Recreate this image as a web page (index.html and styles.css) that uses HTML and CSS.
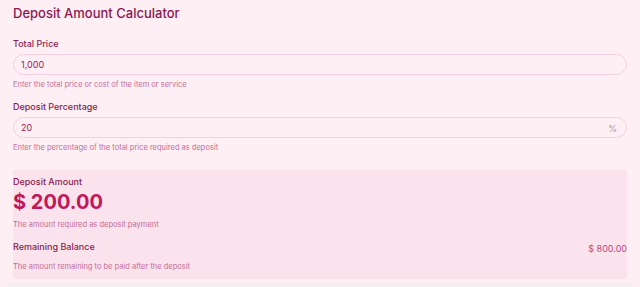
FILE: index.html
```html
<!DOCTYPE html>
<html lang="en">
<head>
  <meta charset="UTF-8">
  <title>Deposit Amount Calculator</title>
  <link rel="stylesheet" href="styles.css">
</head>
<body>

  <div class="calculator">
    <h1>Deposit Amount Calculator</h1>

    <div class="field">
      <label for="totalPrice">Total Price</label>
      <div class="input-wrap">
        <input id="totalPrice" type="text" value="1,000">
      </div>
      <p class="hint">Enter the total price or cost of the item or service</p>
    </div>

    <div class="field">
      <label for="depositPercent">Deposit Percentage</label>
      <div class="input-wrap">
        <input id="depositPercent" type="text" value="20">
        <span class="suffix">%</span>
      </div>
      <p class="hint">Enter the percentage of the total price required as deposit</p>
    </div>

    <div class="result">
      <div class="result-label">Deposit Amount</div>
      <div class="result-value">$ 200.00</div>
      <p class="hint">The amount required as deposit payment</p>

      <div class="balance-row">
        <div class="result-label">Remaining Balance</div>
        <div class="balance-value">$ 800.00</div>
      </div>
      <p class="hint">The amount remaining to be paid after the deposit</p>
    </div>
  </div>

  <div class="footer-line"></div>

</body>
</html>
```

FILE: styles.css
```css
body {
  font-family: Inter, "Noto Sans", sans-serif;
  margin: 0;
  background: #fdeff4;
  color: #8a1b4f;
}

.calculator {
  padding: 3px 13px 0;
}

h1 {
  margin: 0 0 15px;
  font-size: 13px;
  font-weight: 500;
  line-height: 20px;
  color: #8e1652;
}

.field {
  margin-bottom: 11px;
}

.field + .field {
  margin-bottom: 17px;
}

label {
  display: block;
  font-size: 9px;
  font-weight: 500;
  line-height: 12px;
  margin-bottom: 4px;
  color: #8a1b4f;
}

.input-wrap {
  position: relative;
}

input {
  display: block;
  width: 100%;
  box-sizing: border-box;
  height: 21px;
  padding: 0 24px 0 7px;
  border: 1px solid #f4d0e0;
  border-radius: 999px;
  background: #fdeff4;
  font-family: inherit;
  font-size: 9px;
  color: #a21a5a;
  outline: none;
}

.suffix {
  position: absolute;
  right: 10px;
  top: 50%;
  transform: translateY(-50%);
  font-size: 9px;
  color: #d08aac;
}

.hint {
  margin: 5px 0 0;
  font-size: 7.5px;
  line-height: 10px;
  color: #c46e98;
}

.result {
  background: #fae3ec;
  padding: 6px 0 7px;
}

.result-label {
  font-size: 9px;
  font-weight: 500;
  line-height: 12px;
  color: #8a1b4f;
}

.result-value {
  margin-top: 2px;
  font-size: 20px;
  font-weight: 700;
  line-height: 24px;
  color: #c2185b;
}

.result .hint {
  margin-top: 6px;
}

.balance-row {
  display: flex;
  justify-content: space-between;
  align-items: flex-start;
  margin-top: 11px;
}

.balance-value {
  padding-top: 2px;
  font-size: 9px;
  line-height: 12px;
  color: #c2467e;
}

.result .balance-row + .hint {
  margin-top: 7px;
}

.footer-line {
  margin: 4px 8px 0;
  height: 6px;
  background: #f2eef0;
}
```
